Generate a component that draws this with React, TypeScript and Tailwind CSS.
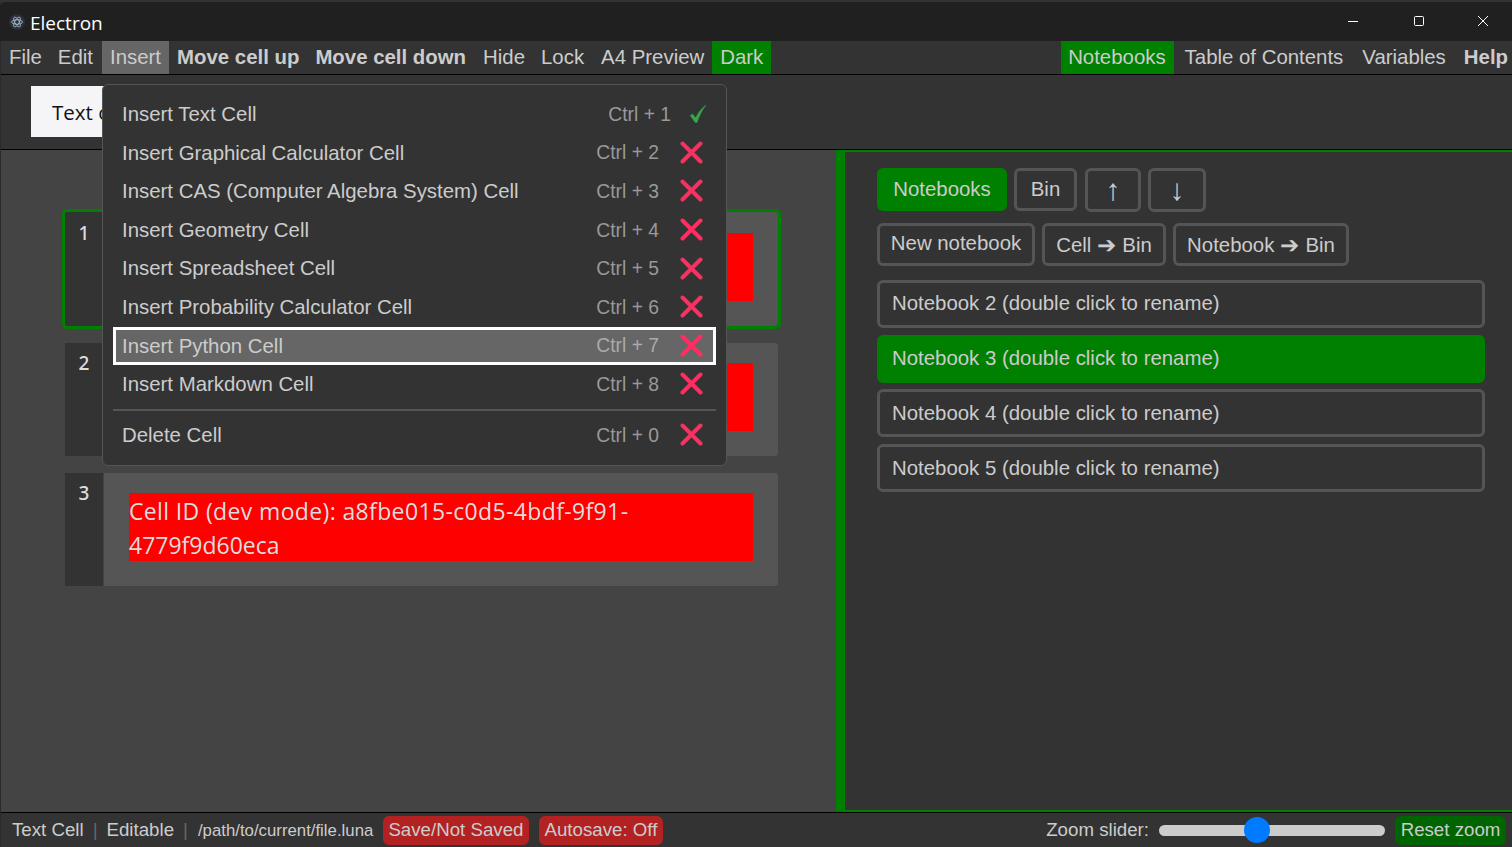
const items = [
  ["Insert Text Cell", "Ctrl + 1", true],
  ["Insert Graphical Calculator Cell", "Ctrl + 2", false],
  ["Insert CAS (Computer Algebra System) Cell", "Ctrl + 3", false],
  ["Insert Geometry Cell", "Ctrl + 4", false],
  ["Insert Spreadsheet Cell", "Ctrl + 5", false],
  ["Insert Probability Calculator Cell", "Ctrl + 6", false],
  ["Insert Python Cell", "Ctrl + 7", false],
  ["Insert Markdown Cell", "Ctrl + 8", false],
] as const;

function Cross() {
  return (
    <svg width="23" height="23" viewBox="0 0 23 23" className="shrink-0 mr-[13px] -mt-[1px]">
      <path d="M2.5 2.5 L20.5 20.5 M20.5 2.5 L2.5 20.5" stroke="#fb2f62" strokeWidth="4" strokeLinecap="round" fill="none" />
    </svg>
  );
}

function Check() {
  return (
    <svg width="16" height="18" viewBox="0 0 16 18" className="shrink-0 mr-[10px]">
      <path d="M0.4 10.5 L2.5 9.2 L5.8 13 C8 8 11 4 15.6 0.4 C12 5 9 11 7 17.4 L5.3 17.4 Z" fill="#37a54a" stroke="#37a54a" strokeWidth="0.7" />
    </svg>
  );
}

function MenuItem({ label, keys, ok, active }: { label: string; keys: string; ok?: boolean; active?: boolean }) {
  return (
    <div className={`h-[38.6px] flex items-center ${active ? "bg-[#666] outline-[3px] outline-white -outline-offset-[3px]" : ""}`}>
      <span className="flex-1 pl-[9px]">{label}</span>
      <span className={`text-[19.3px] pt-[2px] ${ok ? "mr-[19px] text-[#999]" : active ? "mr-[21px] text-[#aaa]" : "mr-[21px] text-[#999]"}`}>{keys}</span>
      {ok ? <Check /> : <Cross />}
    </div>
  );
}

function Cell({ n, active, children }: { n: number; active?: boolean; children?: React.ReactNode }) {
  return (
    <div className={`flex w-[713px] rounded-[2px] ${active ? "h-[114px] outline-[3px] outline-[#008000]" : "h-[113px]"}`}>
      <div className={`w-[38px] bg-[#333] text-center text-[19px] font-medium text-[#ddd] font-['Noto_Sans',sans-serif] ${active ? "pt-[7px]" : "pt-[6px]"}`}>{n}</div>
      <div className={`flex-1 bg-[#555] border-l border-[#444] rounded-r-[3px] px-[25px] ${active ? "pt-[21px]" : "pt-[20px]"}`}>{children}</div>
    </div>
  );
}

function Btn({ children, className = "" }: { children: React.ReactNode; className?: string }) {
  return <div className={`border-[3px] border-[#555] rounded-[6px] flex items-center justify-center ${className}`}>{children}</div>;
}

export default function App() {
  return (
    <div className="w-[1512px] h-[847px] overflow-hidden relative flex flex-col bg-[#333] text-[#ccc] font-['Liberation_Sans',Arial,sans-serif] text-[20.4px]">
      {/* title bar */}
      <div className="h-[41px] shrink-0 bg-[#202020] border-t-2 border-[#333] rounded-tl-[6px] flex items-center pt-[3px] text-white font-['Open_Sans',sans-serif] text-[19px]">
        <svg width="16" height="16" viewBox="0 0 16 16" className="ml-[9px] mr-[5px] -mt-[2px]">
          <circle cx="8" cy="8" r="8" fill="#2b2e3b" />
          <g stroke="#a9c4cf" strokeWidth="0.8" fill="none">
            <ellipse cx="8" cy="8" rx="5.5" ry="2.2" />
            <ellipse cx="8" cy="8" rx="5.5" ry="2.2" transform="rotate(60 8 8)" />
            <ellipse cx="8" cy="8" rx="5.5" ry="2.2" transform="rotate(120 8 8)" />
          </g>
        </svg>
        <span>Electron</span>
        <div className="flex-1" />
        <svg width="12" height="12" viewBox="0 0 12 12" className="mr-[54px] -mt-[5px]"><path d="M1 6.5 H11" stroke="#fff" /></svg>
        <svg width="12" height="12" viewBox="0 0 12 12" className="mr-[52px] -mt-[5px]"><rect x="1.5" y="1.5" width="9" height="9" rx="1" stroke="#fff" fill="none" /></svg>
        <svg width="12" height="12" viewBox="0 0 12 12" className="mr-[23px] -mt-[5px]"><path d="M1 1 L11 11 M11 1 L1 11" stroke="#fff" /></svg>
      </div>
      {/* menu bar */}
      <div className="h-[34px] shrink-0 bg-[#333] border-b border-black flex items-center">
        <div className="flex items-stretch h-[33px] leading-[32px] pl-[1px]">
          <span className="px-[8px]">File</span>
          <span className="px-[8px]">Edit</span>
          <span className="px-[8px] ml-[1px] bg-[#666]">Insert</span>
          <span className="px-[8px] font-bold">Move cell up</span>
          <span className="px-[8px] font-bold">Move cell down</span>
          <span className="px-[8px] ml-[1px]">Hide</span>
          <span className="px-[8px]">Lock</span>
          <span className="px-[8px] ml-[1px]">A4 Preview</span>
          <span className="px-[8px] bg-[#008000]">Dark</span>
        </div>
        <div className="flex-1" />
        <div className="flex items-stretch h-[33px] leading-[32px]">
          <span className="pl-[7px] pr-[8px] bg-[#008000]">Notebooks</span>
          <span className="px-[8px] ml-[3px]">Table of Contents</span>
          <span className="px-[8px] ml-[3px]">Variables</span>
          <span className="pl-[10px] pr-[4px] font-bold">Help</span>
        </div>
      </div>
      {/* toolbar */}
      <div className="h-[75px] shrink-0 bg-[#333] border-b border-black pt-[11px] pl-[31px]">
        <div className="w-[200px] h-[51px] bg-[#f5f5f7] text-[#111] font-['Open_Sans',sans-serif] text-[20.5px] flex items-center pl-[21px] pt-[1px]">Text cell</div>
      </div>
      {/* main */}
      <div className="flex-1 flex min-h-0">
        <div className="w-[836px] bg-[#444] pl-[65px] pt-[62px] flex flex-col gap-[17px]">
          <Cell n={1} active><div className="h-[68px] bg-[#f00]" /></Cell>
          <Cell n={2}><div className="h-[68px] bg-[#f00]" /></Cell>
          <Cell n={3}>
            <div className="h-[68px] bg-[#f00] text-[23px] leading-[34px] text-[#ddd] font-['Open_Sans',sans-serif] pt-[1px]">
              <span className="tracking-[0.36px]">Cell ID (dev mode): a8fbe015-c0d5-4bdf-9f91-</span><br />4779f9d60eca
            </div>
          </Cell>
        </div>
        <div className="flex-1 bg-[#333] border-l-[9px] border-y-2 border-[#008000] pl-[32px] pr-[27px] pt-[16px] flex flex-col">
          <div className="flex gap-[7px] h-[44px] items-start">
            <div className="h-[43px] w-[130px] bg-[#008000] rounded-[6px] flex items-center justify-center pb-[1px]">Notebooks</div>
            <Btn className="h-[43px] w-[63px] pb-[1px]">Bin</Btn>
            <Btn className="h-[44px] w-[56px] ml-[1px] text-[30px] leading-none">↑</Btn>
            <Btn className="h-[44px] w-[58px] text-[30px] leading-none">↓</Btn>
          </div>
          <div className="flex gap-[7px] mt-[11px] h-[43px]">
            <Btn className="w-[158px] pb-[3px]">New notebook</Btn>
            <Btn className="w-[124px] pt-[2px]">Cell <span className="text-[23px] leading-none mx-[6px]">➔</span> Bin</Btn>
            <Btn className="w-[176px] pt-[2px]">Notebook <span className="text-[23px] leading-none mx-[6px]">➔</span> Bin</Btn>
          </div>
          <div className="flex flex-col gap-[6.7px] mt-[14px]">
            <Btn className="h-[48px] !justify-start pl-[12px] pb-[2px]">Notebook 2 (double click to rename)</Btn>
            <div className="h-[48px] bg-[#008000] rounded-[6px] flex items-center pl-[15px] pb-[1px]">Notebook 3 (double click to rename)</div>
            <Btn className="h-[48px] !justify-start pl-[12px] pb-[1px]">Notebook 4 (double click to rename)</Btn>
            <Btn className="h-[48px] !justify-start pl-[12px]">Notebook 5 (double click to rename)</Btn>
          </div>
        </div>
      </div>
      {/* status bar */}
      <div className="h-[35px] shrink-0 bg-[#333] border-t border-black flex items-center text-[18.7px] pl-[12px] pt-[1px]">
        <span>Text Cell</span>
        <span className="text-[#666] mx-[9px]">|</span>
        <span>Editable</span>
        <span className="text-[#666] mx-[9px]">|</span>
        <span className="w-[185px] text-[16.8px] ml-[1px]">/path/to/current/file.luna</span>
        <span className="h-[29px] w-[146px] bg-[#b22222] rounded-[6px] flex items-center justify-center">Save/Not Saved</span>
        <span className="ml-[10px] h-[29px] w-[124px] bg-[#b22222] rounded-[6px] flex items-center justify-center">Autosave: Off</span>
        <div className="flex-1" />
        <span>Zoom slider:</span>
        <div className="relative w-[226px] h-[11px] bg-[#ccc] rounded-full ml-[10px] mr-[10px]">
          <div className="absolute left-[85px] -top-[8px] w-[26px] h-[26px] rounded-full bg-[#007bff]" />
        </div>
        <span className="h-[29px] w-[111px] mr-[6px] bg-[#006400] rounded-[6px] flex items-center justify-center">Reset zoom</span>
      </div>
      {/* dropdown menu */}
      <div className="absolute left-[102px] top-[84px] w-[625px] h-[382px] bg-[#333] border border-[#555] rounded-[6px] pl-[10px] pr-[10px] pt-[10px]">
        {items.map(([l, k, ok]) => (
          <MenuItem key={l} label={l} keys={k} ok={ok} active={l === "Insert Python Cell"} />
        ))}
        <div className="h-[2px] bg-[#555] mt-[5px] mb-[5px]" />
        <MenuItem label="Delete Cell" keys="Ctrl + 0" />
      </div>
      {/* window edge */}
      <div className="absolute left-0 top-[41px] bottom-0 w-[1px] bg-[#2a2a2a]" />
    </div>
  );
}
